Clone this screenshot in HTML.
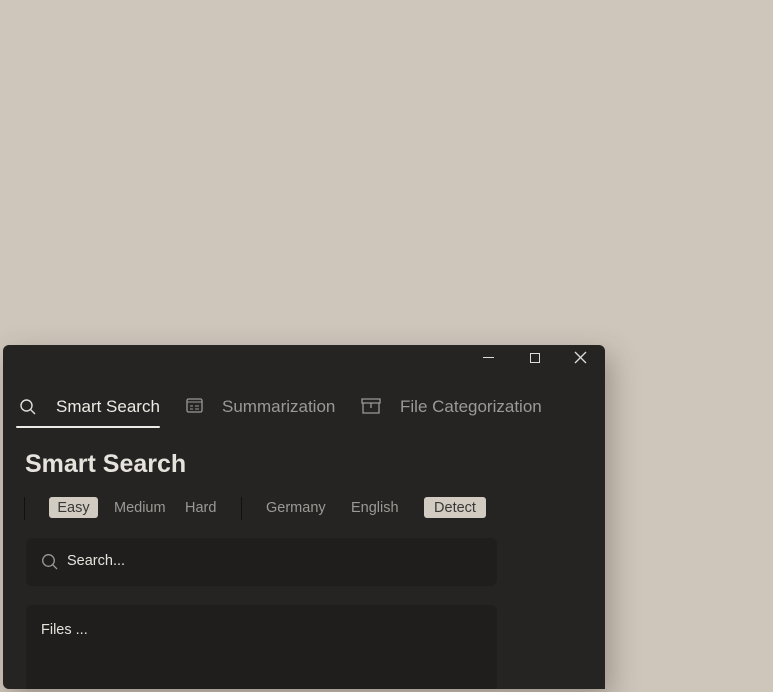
<!DOCTYPE html>
<html><head><style>
html,body{margin:0;padding:0}
body{width:773px;height:692px;background:#cec6bb;position:relative;overflow:hidden;font-family:"Liberation Sans",sans-serif}
.win{position:absolute;left:3px;top:345px;width:602px;height:344px;background:#252423;border-radius:6px 6px 0 6px;box-shadow:6px 10px 28px rgba(60,50,40,.35)}
.t{position:absolute;white-space:nowrap}
.tab{font-size:17px;color:#9c9995;top:397px}
.pill{position:absolute;top:497px;height:21px;border-radius:3px;background:#d2cbc2;color:#3a3835;font-size:14.5px;line-height:22px;text-align:center}
.opt{font-size:14.5px;color:#9c9995;top:500px}
.box{position:absolute;left:26px;width:471px;background:#1f1e1d;border-radius:6px}
</style></head><body>
<div class="win"></div>
<div style="position:absolute;left:483px;top:357px;width:11px;height:1px;background:#ddd"></div>
<div style="position:absolute;left:530px;top:353px;width:8px;height:8px;border:1.5px solid #ddd"></div>
<svg style="position:absolute;left:574px;top:351px" width="13" height="13"><path d="M1 1L12 12M12 1L1 12" stroke="#ddd" stroke-width="1.3"/></svg>
<svg style="position:absolute;left:19px;top:398px" width="18" height="18"><circle cx="7.5" cy="7.5" r="5.5" fill="none" stroke="#ddd" stroke-width="1.4"/><path d="M11.5 11.5L16 16" stroke="#ddd" stroke-width="1.4"/></svg>
<div class="t tab" style="left:56px;color:#eeeae5">Smart Search</div>
<div style="position:absolute;left:16px;top:426px;width:144px;height:2px;background:#eeeae5;border-radius:1px"></div>
<svg style="position:absolute;left:186px;top:398px" width="18" height="16"><rect x="1" y="1" width="15" height="13" rx="1.5" fill="none" stroke="#9c9995" stroke-width="1.3"/><path d="M1 4h15M4 8h3M4 11h3M9 8h4M9 11h4" stroke="#9c9995" stroke-width="1.1"/></svg>
<div class="t tab" style="left:222px">Summarization</div>
<svg style="position:absolute;left:361px;top:398px" width="20" height="17"><path d="M2 5h16v10H2zM1 1h18v4H1zM10 5v5" fill="none" stroke="#9c9995" stroke-width="1.3"/></svg>
<div class="t tab" style="left:400px">File Categorization</div>
<div class="t" style="left:25px;top:450px;font-size:25px;font-weight:bold;color:#e6e2dc">Smart Search</div>
<div style="position:absolute;left:24px;top:497px;width:1px;height:23px;background:#111"></div>
<div style="position:absolute;left:241px;top:497px;width:1px;height:23px;background:#111"></div>
<div class="pill" style="left:49px;width:49px">Easy</div>
<div class="t opt" style="left:114px">Medium</div>
<div class="t opt" style="left:185px">Hard</div>
<div class="t opt" style="left:266px">Germany</div>
<div class="t opt" style="left:351px">English</div>
<div class="pill" style="left:424px;width:62px">Detect</div>
<div class="box" style="top:538px;height:48px"></div>
<svg style="position:absolute;left:41px;top:553px" width="18" height="18"><circle cx="7.5" cy="7.5" r="5.8" fill="none" stroke="#9c9995" stroke-width="1.3"/><path d="M11.8 11.8L16 16" stroke="#9c9995" stroke-width="1.3"/></svg>
<div class="t" style="left:67px;top:553px;font-size:14.5px;color:#e6e2dc">Search...</div>
<div class="box" style="top:605px;height:84px;border-radius:6px 6px 0 0"></div>
<div class="t" style="left:41px;top:622px;font-size:14.5px;color:#e6e2dc">Files ...</div>
</body></html>
